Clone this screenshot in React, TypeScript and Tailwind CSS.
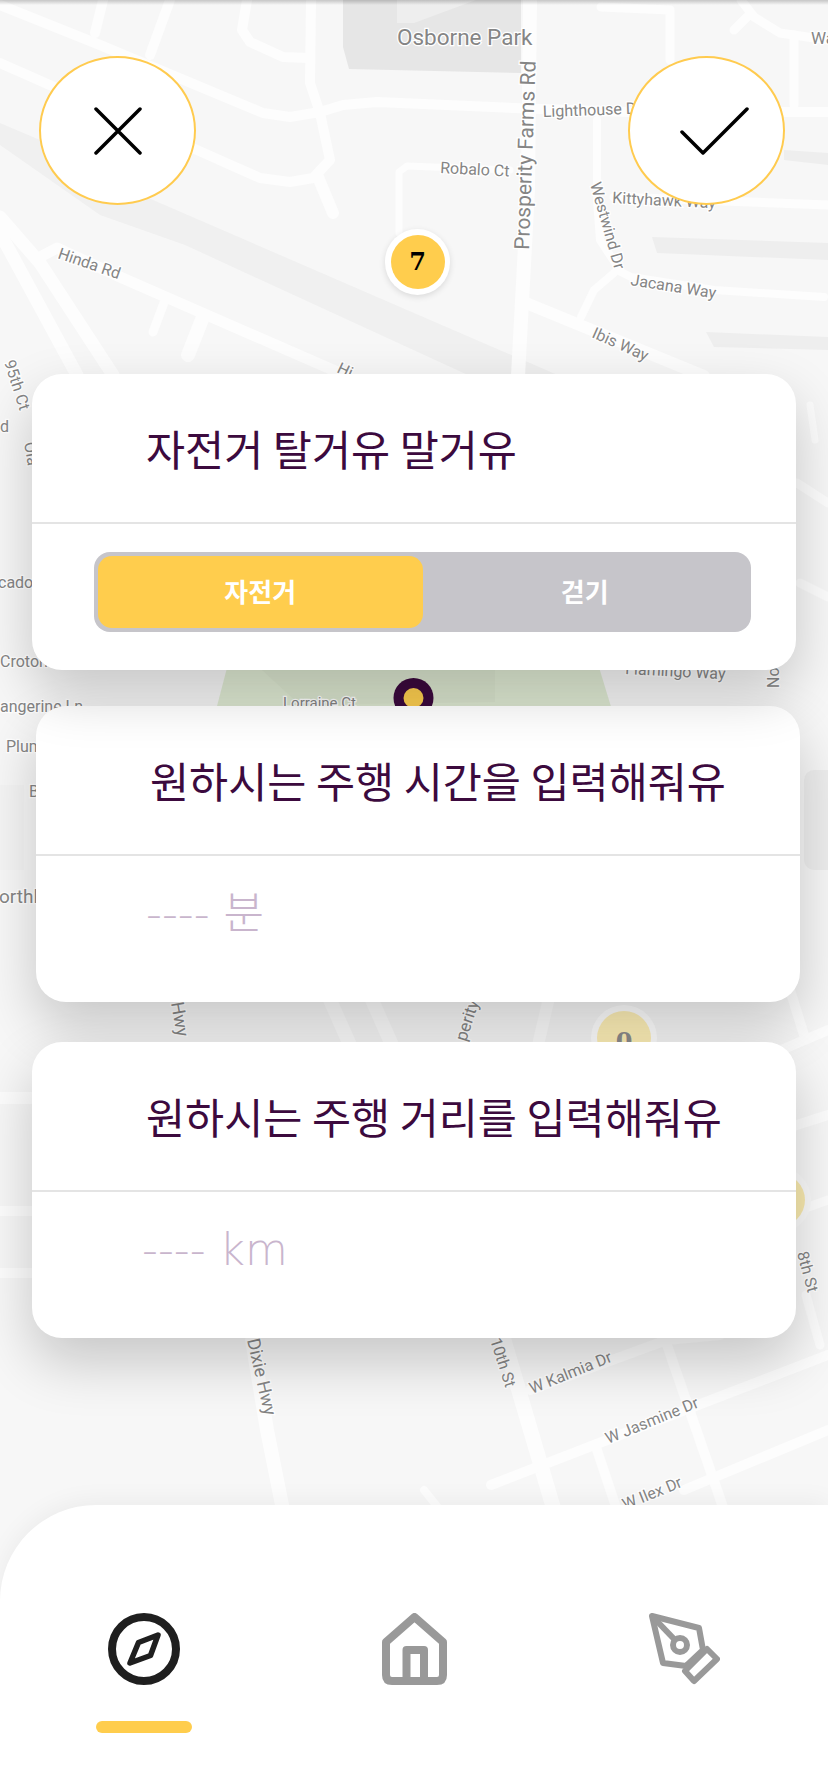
import type { ReactNode } from "react";

const ROADS: { d: string; w: number }[] = [
	{ d: "M0 5 L100 45 L263 113 L290 117 L320 112 L343 105 L377 102 L514 108 L628 112 L828 112", w: 10 },
	{ d: "M0 63 L197 150 L260 178 L290 182 L313 178 L330 160 L320 113 L310 83 L311 0", w: 10 },
	{ d: "M318 177 L333 213", w: 12 },
	{ d: "M103 0 L95 33", w: 10 },
	{ d: "M170 0 L150 55", w: 10 },
	{ d: "M247 0 L242 30 L250 42 L283 57 L308 58", w: 10 },
	{ d: "M0 217 L40 263 L113 375", w: 13 },
	{ d: "M0 233 L77 375", w: 13 },
	{ d: "M38 258 L57 248 L120 277 L333 370 L345 376", w: 11 },
	{ d: "M165 300 L153 332", w: 9 },
	{ d: "M203 317 L188 355", w: 14 },
	{ d: "M399 233 L399 172 L407 166 L510 170", w: 7 },
	{ d: "M530 0 L528 190 L518 376", w: 14 },
	{ d: "M597 120 L597 200 L600 240 L621 272 L631 277 L714 290 L824 297", w: 8 },
	{ d: "M614 273 L594 290 L581 317", w: 8 },
	{ d: "M526 303 L704 376", w: 12 },
	{ d: "M614 197 L828 205", w: 9 },
	{ d: "M601 7 L670 10 L670 60", w: 9 },
	{ d: "M741 0 L754 17 L780 33 L828 40", w: 9 },
	{ d: "M747 17 L734 30", w: 9 },
	{ d: "M794 35 L794 105", w: 9 },
	{ d: "M797 483 L828 503", w: 9 },
	{ d: "M800 583 L828 597", w: 9 },
	{ d: "M810 405 L815 440", w: 7 },
	{ d: "M0 1098 L40 1098", w: 12 },
	{ d: "M0 1211 L40 1211", w: 10 },
	{ d: "M0 1273 L40 1273", w: 10 },
	{ d: "M330 1000 L350 1045", w: 14 },
	{ d: "M372 1000 L392 1045", w: 14 },
	{ d: "M548 1002 L538 1045", w: 12 },
	{ d: "M790 990 L804 1035", w: 10 },
	{ d: "M781 1050 L828 1030", w: 10 },
	{ d: "M781 1130 L828 1115", w: 10 },
	{ d: "M800 1210 L828 1200", w: 9 },
	{ d: "M806 1295 L820 1345", w: 9 },
	{ d: "M504 1340 L554 1510", w: 15 },
	{ d: "M530 1390 L667 1340 L720 1335", w: 10 },
	{ d: "M491 1485 L607 1440 L828 1355", w: 10 },
	{ d: "M667 1345 L724 1510", w: 10 },
	{ d: "M684 1490 L828 1430", w: 10 },
	{ d: "M597 1450 L617 1510", w: 10 },
	{ d: "M252 1340 L267 1430 L283 1510", w: 14 },
	{ d: "M424 1490 L440 1510", w: 8 },
];

const LABELS: { t: string; x: number; y: number; r?: number; s?: number }[] = [
	{ t: "Osborne Park", x: 397, y: 45, s: 22.5 },
	{ t: "Prosperity Farms Rd", x: 529, y: 250, r: -88, s: 21 },
	{ t: "Lighthouse Dr", x: 543, y: 117, r: -2, s: 16 },
	{ t: "Robalo Ct", x: 440, y: 173, r: 3, s: 16 },
	{ t: "Kittyhawk Way", x: 612, y: 203, r: 3, s: 16 },
	{ t: "Westwind Dr", x: 590, y: 184, r: 74, s: 16 },
	{ t: "Jacana Way", x: 630, y: 285, r: 9, s: 16 },
	{ t: "Ibis Way", x: 591, y: 337, r: 24, s: 16 },
	{ t: "Hinda Rd", x: 57, y: 258, r: 19, s: 16 },
	{ t: "Hi", x: 336, y: 372, r: 25, s: 16 },
	{ t: "Wa", x: 811, y: 44, s: 17 },
	{ t: "95th Ct", x: 4, y: 362, r: 72, s: 16 },
	{ t: "d", x: 0, y: 432, s: 16 },
	{ t: "Ola", x: 24, y: 443, r: 80, s: 16 },
	{ t: "cado", x: -2, y: 588, s: 16 },
	{ t: "Croton", x: 0, y: 667, s: 16 },
	{ t: "angerine Ln", x: 0, y: 712, s: 16 },
	{ t: "Plum", x: 6, y: 752, s: 16 },
	{ t: "B", x: 29, y: 797, s: 16 },
	{ t: "orthl", x: -1, y: 903, s: 19 },
	{ t: "Flamingo Way", x: 625, y: 674, r: 3, s: 16 },
	{ t: "No", x: 779, y: 688, r: -90, s: 16 },
	{ t: "Lorraine Ct", x: 283, y: 708, s: 15 },
	{ t: "Hwy", x: 171, y: 1003, r: 80, s: 18 },
	{ t: "perity", x: 466, y: 1042, r: -72, s: 17 },
	{ t: "8th St", x: 797, y: 1253, r: 75, s: 16 },
	{ t: "Dixie Hwy", x: 247, y: 1340, r: 77, s: 18 },
	{ t: "10th St", x: 490, y: 1340, r: 72, s: 16 },
	{ t: "W Kalmia Dr", x: 532, y: 1394, r: -22, s: 16 },
	{ t: "W Jasmine Dr", x: 608, y: 1444, r: -22, s: 16 },
	{ t: "W Ilex Dr", x: 625, y: 1510, r: -22, s: 16 },
];

function MapBackground() {
	return (
		<svg className="absolute inset-0" width={828} height={1792} viewBox="0 0 828 1792">
			<defs>
				<linearGradient id="top-shade" x1="0" y1="0" x2="0" y2="1">
					<stop offset="0" stopColor="#000" stopOpacity={0.2} />
					<stop offset="1" stopColor="#000" stopOpacity={0} />
				</linearGradient>
			</defs>
			<rect width={828} height={1792} fill="#f7f7f7" />
			<path d="M343 0 L343 47 L349 69 L521 73 L521 0 Z" fill="#e6e6e6" />
			<path d="M397 0 L397 23 L414 23 L476 0 Z" fill="#eeeeee" />
			<path d="M0 123 L40 140 L130 190 L414 313 L560 376 L470 376 L185 245 L100 215 L0 145 Z" fill="#f0f0f0" />
			<path d="M652 237 L828 243 L828 260 L657 253 Z" fill="#eeeeee" />
			<path d="M706 332 L828 337 L828 350 L714 347 Z" fill="#eeeeee" />
			<path d="M784 150 L828 153 L828 165 L784 160 Z" fill="#eeeeee" />
			<path d="M0 785 L24 785 L24 870 L0 870 Z" fill="#f4f4f4" />
			<rect x={804} y={770} width={40} height={100} rx={10} fill="#eeeeee" />
			<path d="M216 710 L228 664 L598 664 L612 710 Z" fill="#e0ebd4" />
			<path d="M262 670 L300 705 L495 702 L495 670 Z" fill="#dbe6cf" />
			{ROADS.map((r) => (
				<path key={r.d} d={r.d} fill="none" stroke="#fdfdfd" strokeWidth={r.w} strokeLinecap="round" strokeLinejoin="round" />
			))}
			<circle cx={413.5} cy={698} r={20} fill="#3c0a3e" />
			<circle cx={413.5} cy={698} r={10} fill="#ffd050" />
			<circle cx={624} cy={1038} r={33} fill="#ffffff" />
			<circle cx={624} cy={1038} r={27} fill="#fff1b8" />
			<text x={624} y={1050} textAnchor="middle" fontFamily="'DejaVu Serif', serif" fontWeight={700} fontSize={24} fill="#8c8c8c">0</text>
			<circle cx={778} cy={1200} r={33} fill="#fafafa" />
			<circle cx={778} cy={1200} r={27} fill="#f8e9ae" />
			{LABELS.map((l) => (
				<text
					key={l.t}
					x={l.x}
					y={l.y}
					transform={l.r ? `rotate(${l.r} ${l.x} ${l.y})` : undefined}
					fontFamily="Roboto, sans-serif"
					fontSize={l.s ?? 16}
					fill="#858585"
					stroke="#ffffff"
					strokeWidth={2.5}
					paintOrder="stroke"
				>
					{l.t}
				</text>
			))}
			<rect width={828} height={5} fill="url(#top-shade)" />
		</svg>
	);
}

function RoundButton({ children }: { children: ReactNode }) {
	return (
		<button className="w-[157px] h-[149px] rounded-[50%] bg-white border-2 border-[#ffcb4f] flex items-center justify-center">
			{children}
		</button>
	);
}

function Card({
	title,
	className,
	children,
}: {
	title: string;
	className: string;
	children: ReactNode;
}) {
	return (
		<section
			className={`relative w-[764px] h-[296px] bg-white rounded-[30px] shadow-[0_24px_56px_rgba(0,0,0,0.2)] ${className}`}
		>
			<div className="h-[150px] border-b-2 border-[#e4e4e4] pl-[114px] flex items-center">
				<h2 className="text-[42.5px] leading-none text-[#3c0a3e] font-['Noto_Sans_CJK_KR',sans-serif]">
					{title}
				</h2>
			</div>
			{children}
		</section>
	);
}

function Placeholder({ text }: { text: string }) {
	return (
		<p className="pl-[110px] pt-[28px] text-[44px] leading-[60px] font-extralight text-[#c9b5cd] font-['DejaVu_Sans','Noto_Sans_CJK_KR',sans-serif]">
			{text}
		</p>
	);
}

function CompassIcon() {
	return (
		<svg width={72} height={72} viewBox="0 0 72 72" fill="none" stroke="#1f1f1f" strokeWidth={8} strokeLinejoin="round">
			<circle cx={36} cy={36} r={32} />
			<path d="M50 22 L30.5 29.5 L22 50 L42.5 42.5 Z" strokeWidth={5.5} />
		</svg>
	);
}

function HomeIcon() {
	return (
		<svg width={65} height={72} viewBox="0 0 65 72" fill="none" stroke="#999999" strokeWidth={8} strokeLinejoin="round">
			<path d="M4 29 L32.5 4 L61 29 V62 Q61 68 55 68 H10 Q4 68 4 62 Z" />
			<path d="M24.5 68 V37 H42 V68" />
		</svg>
	);
}

function PenIcon() {
	return (
		<svg width={72} height={72} viewBox="0 0 72 72" fill="none" stroke="#999999" strokeWidth={6} strokeLinejoin="round">
			<path d="M4 3 L51 15 L55 37 L38 53 L15 50 Z" />
			<path d="M4 3 L27 27" />
			<circle cx={32} cy={32} r={7} />
			<path d="M59 36 L69 46 L46 68 L37 58 Z" fill="#ffffff" />
		</svg>
	);
}

export default function App() {
	return (
		<div className="relative w-[828px] h-[1792px] overflow-hidden flex flex-col font-['Roboto',sans-serif]">
			<MapBackground />

			{/* cluster pin sits on the map */}
			<div className="absolute left-[385px] top-[229px] w-[65px] h-[66px] rounded-full bg-white shadow-[0_2px_6px_rgba(0,0,0,0.12)] flex items-center justify-center">
				<div className="w-[54px] h-[54px] rounded-full bg-[#ffcd4d] flex items-center justify-center text-[24px] font-bold text-black font-['DejaVu_Serif',serif]">
					7
				</div>
			</div>

			<div className="relative pt-[56px] pl-[39px] pr-[43px] flex justify-between">
				<RoundButton>
					<svg width={48} height={48} viewBox="0 0 48 48" fill="none" stroke="#000" strokeWidth={3.5} strokeLinecap="round">
						<path d="M2 2 L46 46 M46 2 L2 46" />
					</svg>
				</RoundButton>
				<RoundButton>
					<svg className="ml-[16px]" width={70} height={48} viewBox="0 0 70 48" fill="none" stroke="#000" strokeWidth={3.5} strokeLinecap="round" strokeLinejoin="round">
						<path d="M2 25 L23 46 L67 2" />
					</svg>
				</RoundButton>
			</div>

			<div className="relative flex flex-col pt-[169px]">
				<Card title="자전거 탈거유 말거유" className="ml-[32px] z-20">
					<div className="ml-[62px] mt-[28px] w-[657px] h-[80px] rounded-[16px] bg-[#c6c5ca] p-[4px] grid grid-cols-2 text-[26px] font-bold text-white font-['Noto_Sans_CJK_KR',sans-serif]">
						<div className="rounded-[14px] bg-[#ffcd4d] pb-[3px] flex items-center justify-center">자전거</div>
						<div className="pb-[3px] flex items-center justify-center">걷기</div>
					</div>
				</Card>
				<Card title="원하시는 주행 시간을 입력해줘유" className="ml-[36px] mt-[36px] z-0">
					<Placeholder text="---- 분" />
				</Card>
				<Card title="원하시는 주행 거리를 입력해줘유" className="ml-[32px] mt-[40px] z-10">
					<Placeholder text="---- km" />
				</Card>
			</div>

			<nav className="relative z-30 mt-auto h-[287px] bg-white rounded-tl-[96px] shadow-[0_-4px_24px_rgba(0,0,0,0.05)] pt-[108px] px-[108px] flex justify-between items-start">
				<div className="w-[72px] flex flex-col items-center">
					<CompassIcon />
					<span className="mt-[36px] shrink-0 w-[96px] h-[12px] rounded-full bg-[#ffcd4d]" />
				</div>
				<HomeIcon />
				<PenIcon />
			</nav>
		</div>
	);
}
